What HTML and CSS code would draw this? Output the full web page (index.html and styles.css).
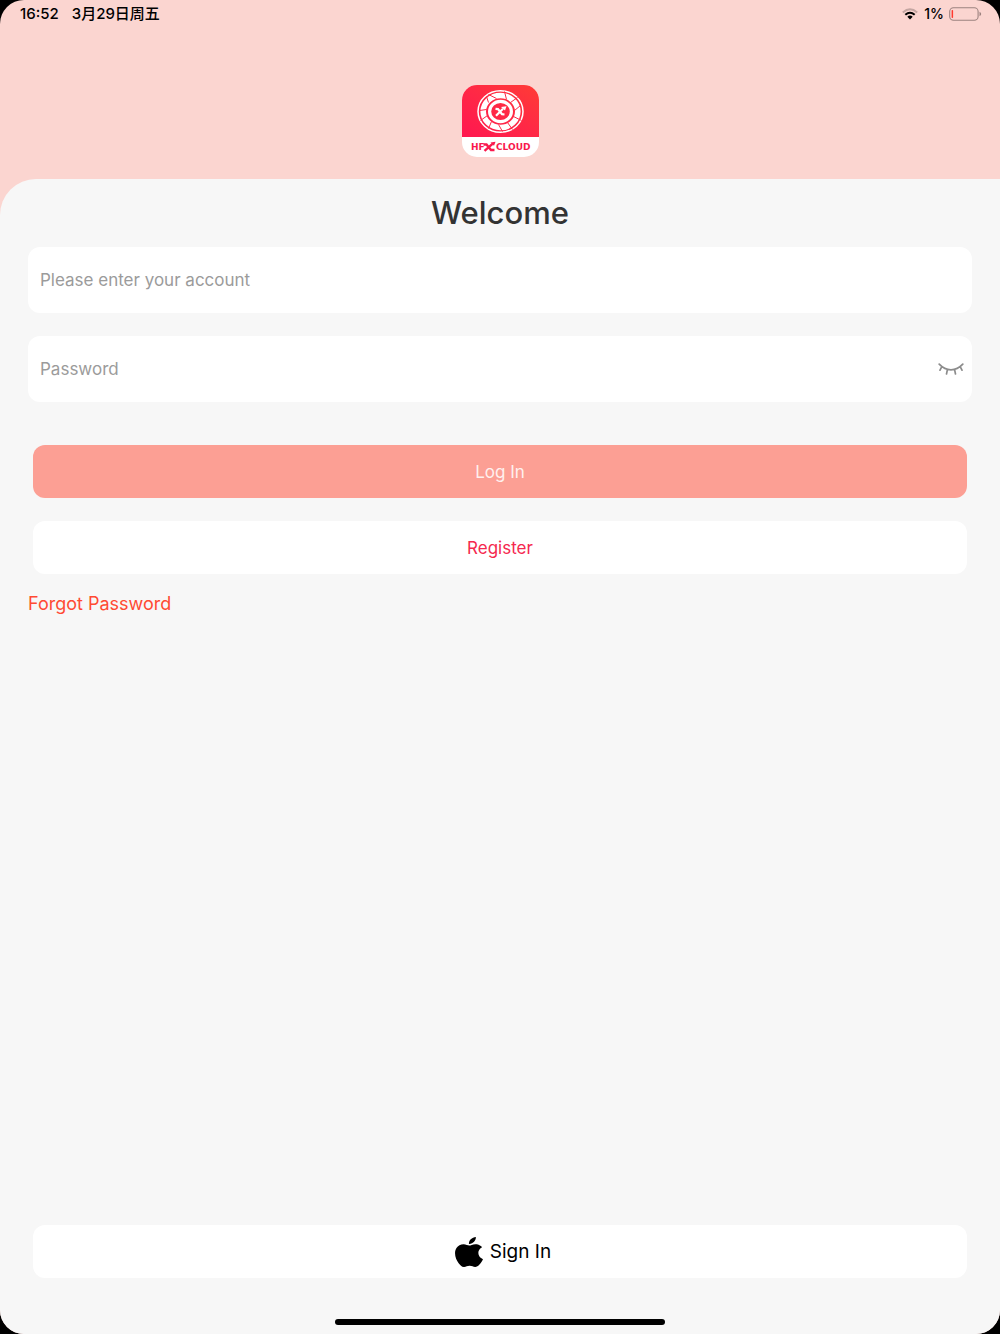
FILE: index.html
```html
<!DOCTYPE html>
<html lang="en">
<head>
<meta charset="utf-8">
<meta name="viewport" content="width=device-width, initial-scale=1">
<title>Welcome</title>
<link rel="stylesheet" href="styles.css">
</head>
<body>
<div class="screen">
  <div class="status">
    <span class="status-time">16:52</span>
    <span class="status-time status-date">3月29日周五</span>
    <svg class="wifi" width="16" height="12" viewBox="0 0 16 12" aria-hidden="true">
      <path d="M.8 4.400Q8-2 15.200 4.400" fill="none" stroke="#c4a6a2" stroke-width="2"/>
      <path d="M3.300 6.700Q8 2.800 12.700 6.700" fill="none" stroke="#000" stroke-width="2.100"/>
      <path d="M5.300 8.700Q8 6.500 10.700 8.700L8 11.400z"/>
    </svg>
    <span>1%</span>
    <svg class="battery" width="33" height="14" viewBox="0 0 33 14" aria-hidden="true">
      <rect x=".7" y=".8" width="28.4" height="12.4" rx="3.8" fill="none" stroke="#9c827f" stroke-width="1.1"/>
      <rect x="2.6" y="3" width="1.5" height="8" rx=".7" fill="#ff3b30"/>
      <path d="M30.5 4.8q1.7.7 1.7 2.2t-1.7 2.2z" fill="#9c827f"/>
    </svg>
  </div>
  <header class="brand">
    <svg width="77" height="72" viewBox="0 0 77 72" role="img" aria-label="HFX Cloud">
      <defs>
        <linearGradient id="red" x1="1" y1="0" x2="0" y2="1">
          <stop offset="0" stop-color="#ff3c35"/><stop offset=".5" stop-color="#ff2846"/><stop offset="1" stop-color="#ff1750"/>
        </linearGradient>
        <clipPath id="tile"><rect width="77" height="72" rx="15"/></clipPath>
      </defs>
      <g clip-path="url(#tile)">
        <path fill="#fff" d="M0 0h77v72H0z"/>
        <path fill="url(#red)" d="M0 0h77v52H0z"/>
      </g>
      <g transform="translate(38.500 26.500)" fill="none" stroke="#fff">
        <ellipse rx="22.500" ry="20.800" stroke-width="1.500"/>
        <ellipse rx="17.300" ry="16" stroke-width="5.600"/>
        <ellipse rx="10.900" ry="10.100" stroke-width="3.200"/>
        <g stroke="#ff2846" stroke-width="1">
          <path d="M-12-9l-2-6M-4-13l-8-4M6-12l-2-8M10-9l7-5M14-1l6-5M13 5l8 4M7 11l5 7M-2 13l4 7M-9 10l-3 7M-13 4l-7 5M-14-2l-7 1"/>
        </g>
        <circle r="7" fill="#ff2846" stroke="none"/>
        <path stroke-width="2.200" d="M-5-2.700l2.500.3 4 5.100 2.500.3M-4.500 4.300l7-7"/>
        <path fill="#fff" stroke="none" d="M.500-4.400l5.500-.9-1.500 4.400z"/>
      </g>
      <g fill="#f9194d" class="logo-text">
        <text x="9" y="65">HF</text>
        <text x="34" y="65">CLOUD</text>
      </g>
      <path fill="none" stroke="#f9194d" stroke-width="2.400" d="M21.500 59.500h3l4.500 5.500h3.500M22.500 65.800l8-7"/>
      <path fill="#f9194d" d="M28.500 57.500l5-.8-1.500 4z"/>
    </svg>
  </header>
  <main class="panel">
    <h1 class="title">Welcome</h1>
    <form class="form">
      <div class="field">
        <input type="text" aria-label="Account" placeholder="Please enter your account">
      </div>
      <div class="field">
        <input type="password" aria-label="Password" placeholder="Password">
        <button type="button" class="eye" aria-label="Show password">
          <svg width="26" height="14" viewBox="0 0 26 14" fill="none" stroke="#8c8c8c" stroke-width="1.700" stroke-linecap="round">
            <path d="M1.200 2.200Q6.500 7.800 13 7.800T24.800 2.200M3.700 4.800L2 8.200M22.300 4.800L24 8.200M9.400 7.600L8.500 12M16.600 7.600L17.500 12"/>
          </svg>
        </button>
      </div>
      <button type="submit" class="button login">Log In</button>
      <button type="button" class="button register">Register</button>
    </form>
    <a class="forgot" href="#forgot">Forgot Password</a>
    <button type="button" class="button apple">
      <svg width="28" height="30" viewBox="2.200 0 19.600 24" preserveAspectRatio="none" aria-hidden="true"><path d="M12.152 6.896c-.948 0-2.415-1.078-3.960-1.040-2.040.027-3.910 1.183-4.961 3.014-2.117 3.675-.546 9.103 1.519 12.090 1.013 1.454 2.208 3.090 3.792 3.039 1.520-.065 2.090-.987 3.935-.987 1.831 0 2.350.987 3.960.948 1.637-.026 2.676-1.480 3.676-2.948 1.156-1.688 1.636-3.325 1.662-3.415-.039-.013-3.182-1.221-3.220-4.857-.026-3.040 2.480-4.494 2.597-4.559-1.429-2.090-3.623-2.324-4.390-2.376-2-.156-3.675 1.090-4.610 1.090zM15.530 3.830c.843-1.012 1.400-2.427 1.245-3.830-1.207.052-2.662.805-3.532 1.818-.780.896-1.454 2.338-1.273 3.714 1.338.104 2.715-.688 3.559-1.701"/></svg>
      <span>Sign In</span>
    </button>
    <div class="home-bar"></div>
  </main>
</div>
</body>
</html>
```
FILE: styles.css
```css
* {
  box-sizing: border-box;
}

body {
  margin: 0;
  background: #000;
  font-family: Inter, "Noto Sans CJK SC", sans-serif;
}

button,
input {
  font: inherit;
  border: 0;
  padding: 0;
  background: none;
}

.screen {
  display: flex;
  flex-direction: column;
  min-height: 100vh;
  overflow: hidden;
  border-radius: 24px;
  background: #fbd5d0;
}

.status {
  display: flex;
  align-items: center;
  height: 28px;
  padding: 0 18px 0 20px;
  font-size: 14px;
  font-weight: 500;
  line-height: 20px;
}

.status-time {
  font-size: 15px;
}

.status-date {
  margin-left: 13px;
}

.wifi {
  margin: 0 6px 0 auto;
}

.battery {
  margin-left: 5px;
}

.brand {
  display: flex;
  justify-content: center;
  padding: 57px 0 22px;
}

.logo-text {
  font-family: "DejaVu Sans", sans-serif;
  font-size: 9px;
  font-weight: 700;
}

.panel {
  display: flex;
  flex: 1;
  flex-direction: column;
  padding: 14px 28px 9px;
  border-top-left-radius: 36px;
  background: #f7f7f7;
}

.title {
  margin: 0 0 14px;
  color: #333;
  font-size: 31px;
  font-weight: 500;
  line-height: 40px;
  text-align: center;
}

.form {
  display: flex;
  flex-direction: column;
}

.field {
  display: flex;
  align-items: center;
  height: 66px;
  margin-bottom: 23px;
  padding: 0 8px 0 12px;
  border-radius: 12px;
  background: #fff;
}

.field input {
  flex: 1;
  min-width: 0;
  height: 100%;
  outline: none;
  color: #333;
  font-size: 17px;
}

.field input::placeholder {
  color: #9b9b9b;
  opacity: 1;
}

.eye {
  display: flex;
}

.button {
  display: flex;
  align-items: center;
  justify-content: center;
  height: 53px;
  margin: 0 5px;
  border-radius: 12px;
  background: #fff;
  font-size: 17px;
}

.login {
  margin-top: 20px;
  margin-bottom: 23px;
  background: #fc9f94;
  color: #fff0ee;
}

.register {
  color: #f5294f;
}

.forgot {
  align-self: flex-start;
  margin-top: 18px;
  color: #ff4a33;
  font-size: 18px;
  line-height: 24px;
  text-decoration: none;
}

.apple {
  gap: 7px;
  margin-top: auto;
  margin-bottom: 41px;
  padding-left: 6px;
  color: #000;
  font-size: 19px;
}

.home-bar {
  align-self: center;
  width: 35%;
  height: 6px;
  border-radius: 3px;
  background: #000;
}
```
